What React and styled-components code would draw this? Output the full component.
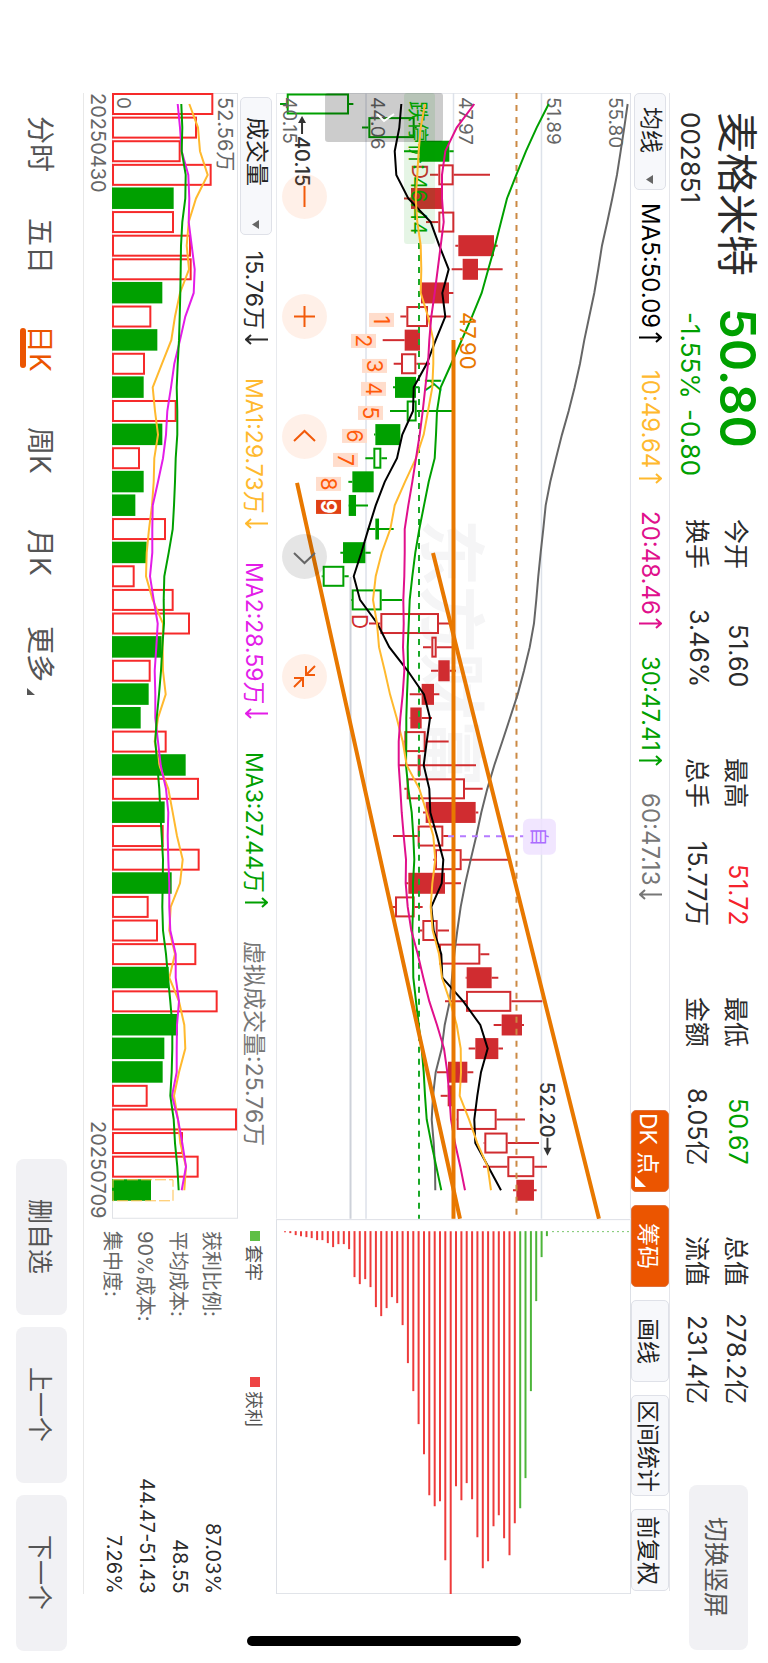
import React from "react";
import styled, { createGlobalStyle } from "styled-components";

const GlobalStyle = createGlobalStyle`
  * {
    box-sizing: border-box;
  }

  body {
    margin: 0;
    background: #fff;
    font-family: Inter, "Noto Sans CJK SC", sans-serif;
  }

  button, select {
    font-family: inherit;
    margin: 0;
    padding: 0;
    border: none;
    writing-mode: vertical-rl;
    text-orientation: sideways;
  }
`;

const GREEN = "#00a000";
const RED = "#d02c30";
const ORANGE = "#eb5500";

/* The terminal is held sideways: inline runs down, blocks run right to left */
const Page = styled.div`
  position: relative;
  width: 100%;
  height: 100vh;
  min-height: 1500px;
  display: flex;
  flex-direction: column;
  writing-mode: vertical-rl;
  text-orientation: sideways;
  color: #2b2b2b;
  white-space: nowrap;
  overflow: hidden;
`;

const Header = styled.header`
  block-size: 98px;
  display: flex;
  align-items: center;
  padding-block-start: 2px;
  padding-inline: 112px 13px;
`;

const Quote = styled.div`
  display: grid;
  grid-template-columns: 196px 211px;
  grid-template-rows: 50px 32px;
  row-gap: 6px;
  align-items: center;
  font-size: 26px;
`;

const StockName = styled.h1`
  margin: 0;
  font-size: 41px;
  line-height: 50px;
  font-weight: 400;
`;

const Price = styled.strong`
  font-size: 49px;
  line-height: 50px;
  font-weight: 600;
  color: ${GREEN};
`;

const Change = styled.span`
  display: flex;
  gap: 10px;
  padding-inline-start: 4px;
  color: ${GREEN};
`;

const Stats = styled.dl`
  flex: 1;
  margin: 0;
  display: grid;
  grid-template-columns: repeat(4, 168px);
  grid-template-rows: 39px 39px;
  column-gap: 71px;
  font-size: 25px;
`;

const Stat = styled.div`
  display: flex;
  justify-content: space-between;
  align-items: center;

  dd {
    margin: 0;
    color: ${(props) => props.$color || "#2b2b2b"};
  }
`;

const GreyButton = styled.button`
  inline-size: ${(props) => props.$size || 156}px;
  block-size: ${(props) => props.$thick || 51}px;
  border-radius: 8px;
  background: #f1f1f4;
  color: #555;
  font-size: 25px;
  cursor: pointer;
`;

const Toolbar = styled.div`
  block-size: 39px;
  margin-inline: 93px 72px;
  border-block-start: 1px solid #e4e5ea;
  display: flex;
  align-items: center;
  gap: 13px;
`;

const Indicators = styled.div`
  flex: 1;
  display: flex;
  align-items: center;
  gap: 27px;
  font-size: 24px;
`;

const Reading = styled.span`
  display: inline-flex;
  align-items: center;
  gap: 4px;
  color: ${(props) => props.$color};
`;

const Arrow = styled.svg`
  inline-size: 11px;
  block-size: 23px;
  fill: none;
  stroke: currentColor;
  stroke-width: 2;
`;

const PickerBox = styled.span`
  position: relative;
  display: inline-flex;
  align-items: center;
`;

const PickerSelect = styled.select`
  appearance: none;
  inline-size: ${(props) => props.$size}px;
  block-size: 32px;
  padding-inline-start: ${(props) => props.$pad}px;
  border: 1px solid #dfe1e8;
  border-radius: 5px;
  background: #f7f8fb;
  color: #222;
  font-size: 23px;
`;

const PickerMark = styled.svg`
  position: absolute;
  inset-inline-end: 6px;
  inset-block-start: 13px;
  width: 7px;
  height: 9px;
  pointer-events: none;
`;

const ToolButton = styled.button`
  position: relative;
  inline-size: ${(props) => props.$size || 82}px;
  block-size: 38px;
  border: 1px solid ${(props) => (props.$active ? "#e0703a" : "#dfe1e8")};
  border-radius: 5px;
  padding-inline-end: ${(props) => (props.$marked ? 14 : 0)}px;
  background: ${(props) => (props.$active ? ORANGE : "#f7f8fb")};
  color: ${(props) => (props.$active ? "#fff" : "#222")};
  font-size: 23px;
  cursor: pointer;
`;

const Corner = styled.svg`
  position: absolute;
  inset-inline-end: 4px;
  inset-block-end: 3px;
  width: 11px;
  height: 11px;
`;

const Row = styled.div`
  flex: ${(props) => (props.$grow ? "1 1 0" : "none")};
  min-block-size: 0;
  margin-inline: 93px 69px;
  display: grid;
  grid-template-columns: minmax(0, 3fr) minmax(0, 1fr);
  grid-template-rows: ${(props) => (props.$grow ? "minmax(0, 1fr)" : "auto")};
`;

const Panel = styled.section`
  position: relative;
  min-block-size: 0;
  display: flex;
  flex-direction: column;
`;

const Chart = styled.svg`
  display: block;
  flex: 1 1 0;
  min-width: 0;
  min-height: 0;
  writing-mode: horizontal-tb;
  fill: none;
`;

const VolumeBox = styled.div`
  block-size: 126px;
  display: flex;
  flex-direction: column;
`;

const RoundTools = styled.div`
  position: absolute;
  inset-inline-start: 81px;
  inset-block-end: 6px;
  display: flex;
  gap: 75px;
`;

const RoundButton = styled.button`
  width: 45px;
  height: 45px;
  border-radius: 50%;
  background: ${(props) => (props.$muted ? "rgba(0, 0, 0, 0.1)" : "rgba(255, 85, 0, 0.09)")};
  color: ${(props) => (props.$muted ? "#666" : "#f25a0a")};
  cursor: pointer;

  svg {
    display: block;
    width: 45px;
    height: 45px;
    fill: none;
    stroke: currentColor;
    stroke-width: 2;
  }
`;

const VolumeHead = styled.div`
  block-size: 38px;
  display: flex;
  align-items: center;
  gap: 33px;
  padding-block-start: 2px;
  padding-inline-start: 4px;
  font-size: 23px;
`;

const FirstReading = styled.div`
  display: flex;
  align-items: center;
  gap: 16px;
`;

const Dates = styled.div`
  block-size: 28px;
  display: flex;
  justify-content: space-between;
  align-items: center;
  font-size: 20px;
  color: #666;
`;

const Legend = styled.div`
  block-size: 38px;
  display: flex;
  align-items: center;
  gap: 96px;
  padding-block-start: 5px;
  padding-inline-start: 12px;
  font-size: 18px;
  color: #555;
`;

const LegendItem = styled.span`
  display: flex;
  align-items: center;
  gap: 4px;

  &::before {
    content: "";
    width: 10px;
    height: 10px;
    background: ${(props) => props.$color};
  }
`;

const Cost = styled.dl`
  margin: 0;
  padding-block-start: 9px;
  padding-inline-start: 12px;
  font-size: 20px;
`;

const CostRow = styled.div`
  block-size: 33px;
  display: flex;
  justify-content: space-between;
  align-items: center;

  dt {
    color: #666;
  }

  dd {
    margin: 0;
  }
`;

const Footer = styled.footer`
  block-size: 84px;
  display: flex;
  justify-content: space-between;
  position: relative;
  padding-inline: 93px 12px;

  &::before {
    content: "";
    position: absolute;
    inset-block-start: 0;
    inset-inline: 93px 69px;
    border-block-start: 1px solid #e8e8e8;
  }
`;

const Tabs = styled.nav`
  display: flex;
`;

const Tab = styled.button`
  position: relative;
  inline-size: 102px;
  block-size: 84px;
  background: none;
  color: ${(props) => (props.$active ? ORANGE : "#555")};
  font-size: 28px;
  cursor: pointer;

  &::after {
    content: "";
    position: absolute;
    inset-inline: 31px;
    inset-block-end: 20px;
    block-size: 6px;
    border-radius: 3px;
    background: ${(props) => (props.$active ? ORANGE : "none")};
  }
`;

const MoreMark = styled.svg`
  position: absolute;
  inset-inline-end: 10px;
  inset-block-end: 27px;
  width: 8px;
  height: 7px;
`;

const Actions = styled.div`
  display: flex;
  gap: 12px;
  padding-block-start: 17px;
`;

const HomeBar = styled.div`
  position: absolute;
  inset-inline-end: 17px;
  inset-block: 247px;
  inline-size: 10px;
  border-radius: 5px;
  background: #000;
`;

const STEP = 23.62;
const FIRST = 11;
const rowY = (i) => FIRST + i * STEP;
const priceX = (v) => v / 3 - 6;
const volumeX = (v) => v / 3 - 112;

// low, body start, body end, high, kind (upper case = filled)
const CANDLES = [
  [30, 50, 237, 250, "g"], [276, 295, 434, 440, "g"], [402, 448, 538, 551, "G"],
  [480, 505, 551, 660, "r"], [402, 423, 517, 517, "R"], [468, 505, 553, 553, "r"],
  [556, 565, 672, 683, "R"], [545, 578, 624, 698, "R"], [450, 453, 537, 550, "R"],
  [391, 409, 474, 542, "r"], [338, 404, 450, 450, "R"], [371, 393, 439, 480, "r"],
  [369, 375, 438, 448, "G"], [360, 410, 440, 550, "g"], [312, 316, 391, 391, "G"],
  [286, 310, 334, 351, "g"], [235, 247, 311, 311, "G"], [235, 236, 258, 294, "G"],
  [293, 316, 327, 371, "g"], [211, 219, 286, 302, "G"], [155, 158, 223, 236, "g"],
  [243, 245, 335, 396, "g"], [297, 331, 507, 545, "r"], [459, 484, 500, 548, "r"],
  [483, 505, 539, 558, "R"], [419, 455, 492, 508, "R"], [419, 421, 455, 486, "R"],
  [401, 403, 467, 536, "r"], [385, 443, 447, 618, "r"], [403, 410, 585, 638, "r"],
  [459, 467, 617, 625, "R"], [369, 443, 520, 535, "r"], [490, 495, 575, 715, "r"],
  [405, 415, 525, 573, "R"], [363, 375, 434, 458, "r"], [448, 457, 503, 537, "r"],
  [505, 507, 631, 658, "r"], [587, 590, 665, 685, "R"], [525, 588, 724, 817, "r"],
  [671, 695, 756, 762, "R"], [596, 616, 685, 699, "R"], [501, 534, 592, 610, "R"],
  [512, 533, 555, 555, "R"], [559, 560, 680, 765, "r"], [641, 643, 713, 807, "r"],
  [639, 712, 793, 831, "r"], [729, 739, 792, 800, "R"],
];

const PRICE_LINES = [
  { color: "#666", data: [1073, 1063, 1052, 1041, 1027, 1012, 996, 985, 973, 958, 943, 930, 914, 896, 876, 858, 841, 827, 820, 812, 805, 799, 792, 779, 762, 743, 720, 697, 673, 652, 634, 619, 602, 586, 572, 562, 553, 546, 539, 524, 515, 497, 489, 485, 491, 495, 496] },
  { color: GREEN, data: [836, 800, 768, 739, 711, 693, 675, 655, 635, 606, 575, 544, 512, 501, 498, 494, 476, 462, 448, 436, 427, 419, 416, 413, 414, 411, 409, 409, 408, 415, 425, 430, 433, 429, 429, 427, 429, 430, 438, 446, 455, 461, 465, 470, 484, 499, 514] },
  { color: "#000", data: [394, 388, 374, 379, 415, 482, 508, 536, 517, 526, 497, 470, 431, 429, 397, 381, 344, 317, 295, 274, 251, 270, 322, 358, 413, 462, 480, 470, 461, 478, 481, 501, 520, 515, 484, 491, 514, 517, 580, 631, 653, 633, 622, 613, 616, 655, 693] },
  { color: "#ffb92e", data: [465, 452, 446, 442, 437, 442, 452, 454, 452, 474, 490, 490, 487, 474, 461, 438, 405, 374, 361, 335, 317, 309, 321, 327, 344, 360, 380, 398, 410, 448, 470, 490, 496, 487, 482, 488, 507, 516, 540, 560, 572, 573, 569, 597, 622, 653, 663] },
  { color: "#e0108c", data: [613, 560, 526, 516, 516, 521, 512, 503, 494, 484, 478, 474, 466, 458, 449, 438, 427, 415, 404, 404, 403, 400, 401, 399, 403, 398, 391, 386, 386, 391, 395, 401, 408, 407, 413, 424, 443, 460, 478, 501, 522, 532, 538, 543, 555, 571, 585] },
];

// positive = hollow red, negative = solid green
const VOLUMES = [
  640, 591, 542, 635, -521, 522, 573, 575, -487, 454, -472, 435, -431, 530, -487, 420,
  -431, -406, 498, -440, 404, 521, 570, -485, 452, -446, -422, 500, -557, 597, -494, 491,
  599, -515, 446, 474, 589, -506, 653, -534, -493, -488, 443, 711, 549, 596, -453,
];

const VOLUME_LINES = [
  { color: "#ffb92e", data: [568, 594, 600, 623, 588, 566, 560, 567, 540, 525, 514, 486, 458, 465, 474, 463, 461, 456, 447, 440, 438, 458, 489, 488, 489, 497, 474, 464, 478, 505, 518, 531, 548, 540, 512, 508, 525, 508, 537, 553, 556, 537, 522, 534, 541, 558, 553] },
  { color: "#e31de8", data: [533, 540, 545, 565, 568, 566, 575, 584, 581, 556, 540, 523, 513, 502, 498, 489, 474, 458, 457, 457, 450, 461, 473, 469, 464, 466, 466, 474, 482, 498, 505, 503, 505, 508, 508, 511, 527, 527, 537, 531, 530, 530, 516, 534, 547, 558, 545] },
  { color: GREEN, data: [544, 547, 545, 557, 556, 547, 543, 542, 541, 539, 537, 533, 530, 532, 532, 527, 525, 522, 518, 506, 493, 491, 492, 487, 483, 477, 470, 466, 472, 478, 481, 485, 489, 488, 487, 489, 498, 504, 511, 517, 517, 515, 511, 521, 525, 532, 536] },
];

const CHIPS = [
  1, 2, 4, 5, 6, 7, 9, 9, 12, 16, 13, 13, 18, 46, 53, 48, 56, 76, 85, 77, 66, 72, 94, 132,
  160, 193, 223, 264, 275, 270, 329, 363, 255, 269, 252, 268, 306, 337, 330, 295, 284, 307,
  324, 292, 277, 247, 160, 70, 26, 5,
];

// x and y of each count mark, centre of the box
const COUNTS = [
  [106, 227], [88, 248], [99, 273], [98, 296], [95, 320], [79, 343], [70, 367], [53, 391], [53, 414],
];

const AXIS = [["40.15", 7], ["44.06", 95], ["47.97", 183], ["51.89", 271], ["55.80", 333]];

const toPoints = (data, x) =>
  data.map((v, i) => `${x(v).toFixed(1)},${rowY(i).toFixed(1)}`).join(" ");

function SideText({ x, y, size = 19, fill = "#666", weight = 400, anchor, children }) {
  return (
    <text
      transform={`translate(${x} ${y}) rotate(90)`}
      fontSize={size}
      fontWeight={weight}
      fill={fill}
      textAnchor={anchor}
    >
      {children}
    </text>
  );
}

function Candle({ index, candle }) {
  const [low, start, end, high, kind] = candle;
  const color = kind.toLowerCase() === "r" ? RED : GREEN;
  const filled = kind === kind.toUpperCase();
  const y = rowY(index);
  const inset = filled ? 0 : 1;
  return (
    <g stroke={color} strokeWidth="2">
      <path d={`M${priceX(low)} ${y}H${priceX(start)}M${priceX(end)} ${y}H${priceX(high)}`} />
      <rect
        x={priceX(start) + inset}
        y={y - 10.5 + inset}
        width={Math.max((end - start) / 3 - inset * 2, 1)}
        height={21 - inset * 2}
        fill={filled ? color : "none"}
        stroke={filled ? "none" : color}
      />
    </g>
  );
}

function PriceChart() {
  return (
    <Chart viewBox="0 0 355 1126" role="img" aria-label="日K">
      <path d="M0 .5H355M.5 0V1126" stroke="#e8eaee" />
      <path d="M354.5 0V1126" stroke="#dfe1e8" />
      <path d="M90 0V1126M177.500 0V1126M265.500 0V1126" stroke="#dde2ea" strokeWidth="1.500" />
      <path d="M74.500 484V1126" stroke="#cdd1d9" strokeWidth="2" />
      <SideText x={151} y={426} size={67} weight={700} fill="#f5f5f6">东方财富</SideText>
      {CANDLES.map((candle, i) => (
        <Candle key={i} index={i} candle={candle} />
      ))}
      <path d="M240.500 0V1126" stroke="#cc8a45" strokeWidth="2" strokeDasharray="6 6" />
      <path d="M143 150V1126" stroke="#1aa828" strokeWidth="2" strokeDasharray="6 6" />
      {AXIS.map(([label, x]) => (
        <SideText key={label} x={x} y={4}>{label}</SideText>
      ))}
      <SideText x={136} y={71} size={21} fill={RED}>D</SideText>
      <SideText x={76} y={521} size={21} fill={RED}>D</SideText>
      <SideText x={149} y={285} size={21} fill={GREEN}>K</SideText>
      <rect x="128" y="0" width="31" height="151" rx="3" fill="#00a000" fillOpacity=".1" />
      <rect x="49" y="0" width="118" height="49" rx="3" fill="#000" fillOpacity=".2" />
      <path d="M101 21L108 28L118 21" stroke="#fff" strokeWidth="2" />
      <SideText x={135} y={8} size={21} fill={GREEN}>跌停价: 46.44</SideText>
      {PRICE_LINES.map(({ color, data }) => (
        <polyline key={color} points={toPoints(data, priceX)} stroke={color} strokeWidth="2" />
      ))}
      {COUNTS.map(([x, y], i) => (
        <g key={i}>
          <rect x={x - 13} y={y - 7} width="25" height="14" fill={i === 8 ? "#e04014" : "#ffddcc"} />
          <SideText x={x - 8} y={y} size={21} weight={i === 8 ? 700 : 400} anchor="middle" fill={i === 8 ? "#fff" : "#ff5a0a"}>
            {i + 1}
          </SideText>
        </g>
      ))}
      <g stroke="#e87800" strokeWidth="4">
        <path d="M177.500 247V1126" />
        <path d="M21 390L184 1126M157 460L323 1126" />
      </g>
      <SideText x={184} y={219} size={22} fill="#e87800">47.90</SideText>
      <SideText x={19} y={43} size={20} weight={500} fill="#333">40.15</SideText>
      <path d="M26 41V26" stroke="#333" strokeWidth="2" />
      <path d="M26 23L22 30H30Z" fill="#333" />
      <SideText x={264} y={989} size={20} weight={500} fill="#333">52.20</SideText>
      <path d="M271.500 1045V1058" stroke="#333" strokeWidth="2" />
      <path d="M271.500 1063L267.500 1055H275.500Z" fill="#333" />
      <path d="M172 743.500H248" stroke="#b57bff" strokeWidth="2" strokeDasharray="6 6" />
      <rect x="247" y="726" width="33" height="36" rx="6" fill="#eee2ff" fillOpacity=".85" />
      <SideText x={256} y={744} size={19} anchor="middle" fill="#ab6cff">自</SideText>
    </Chart>
  );
}

function ChipChart() {
  return (
    <Chart viewBox="0 0 355 375" role="img" aria-label="筹码分布">
      <rect x=".5" y=".5" width="354" height="374" stroke="#dde0e6" />
      {CHIPS.map((length, i) => (
        <path
          key={i}
          d={`M${(9 + i * 5.345).toFixed(1)} 12v${length}`}
          stroke={i < 44 ? "#ee3b3b" : "#4db53a"}
          strokeWidth="2"
        />
      ))}
      <path d="M276 12.500H355" stroke="#7cc96e" strokeDasharray="2 3" />
    </Chart>
  );
}

function VolumeChart() {
  return (
    <Chart viewBox="0 0 126 1126" role="img" aria-label="成交量">
      <rect x=".5" y=".5" width="125" height="1125" stroke="#e0e2e6" />
      {VOLUMES.map((v, i) => {
        const end = volumeX(Math.abs(v));
        const y = rowY(i);
        return v < 0 ? (
          <rect key={i} x="0" y={y - 11} width={end} height="21.500" fill={GREEN} />
        ) : (
          <rect key={i} x="1" y={y - 10} width={end - 2} height="20" stroke="#f62a2a" strokeWidth="2" />
        );
      })}
      <rect x="1" y={rowY(46) - 10.5} width="60" height="21" stroke="#ffc04d" strokeDasharray="11 3" />
      {VOLUME_LINES.map(({ color, data }) => (
        <polyline key={color} points={toPoints(data, volumeX)} stroke={color} strokeWidth="2" />
      ))}
      <SideText x={106} y={4} size={20}>52.56万</SideText>
      <SideText x={5} y={4}>0</SideText>
    </Chart>
  );
}

function Picker({ label, value, size, pad }) {
  return (
    <PickerBox>
      <PickerSelect aria-label={label} $size={size} $pad={pad} defaultValue={value}>
        <option>{value}</option>
      </PickerSelect>
      <PickerMark viewBox="0 0 7 9">
        <path d="M0 4.500L7 0V9Z" fill="#666" />
      </PickerMark>
    </PickerBox>
  );
}

function Trend({ color, up, children }) {
  return (
    <Reading $color={color}>
      {children}
      <Arrow viewBox="0 0 23 11">
        <path d={up ? "M0 5.500H22M17 1L22 5.500L17 10" : "M23 5.500H1M6 1L1 5.500L6 10"} />
      </Arrow>
    </Reading>
  );
}

const STATS = [
  ["今开", "51.60"],
  ["最高", "51.72", "#f5222d"],
  ["最低", "50.67", GREEN],
  ["总值", "278.2亿"],
  ["换手", "3.46%"],
  ["总手", "15.77万"],
  ["金额", "8.05亿"],
  ["流值", "231.4亿"],
];

const COSTS = [
  ["获利比例:", "87.03%"],
  ["平均成本:", "48.55"],
  ["90%成本:", "44.47-51.43"],
  ["集中度:", "7.26%"],
];

const ROUND_TOOLS = [
  ["缩小", "M22.500 12V33"],
  ["放大", "M22.500 12V33M12 22.500H33"],
  ["向左", "M12 27L22.500 17L33 27"],
  ["向右", "M12 19L22.500 29L33 19"],
  ["收起", "M33 12L24 21M24 12V21H33M12 33L21 24M12 24H21V33"],
];

const TABS = ["分时", "五日", "日K", "周K", "月K", "更多"];

export default function App() {
  return (
    <Page>
      <GlobalStyle />
      <Header>
        <Quote>
          <StockName>麦格米特</StockName>
          <Price>50.80</Price>
          <span>002851</span>
          <Change>
            <span>-1.55%</span>
            <span>-0.80</span>
          </Change>
        </Quote>
        <Stats>
          {STATS.map(([name, value, color]) => (
            <Stat key={name} $color={color}>
              <dt>{name}</dt>
              <dd>{value}</dd>
            </Stat>
          ))}
        </Stats>
        <GreyButton $size={165} $thick={59}>切换竖屏</GreyButton>
      </Header>

      <Toolbar>
        <Picker label="主图指标" value="均线" size={97} pad={13} />
        <Indicators>
          <Trend color="#000" up>MA5:50.09</Trend>
          <Trend color="#ffb92e" up>10:49.64</Trend>
          <Trend color="#e0108c" up>20:48.46</Trend>
          <Trend color={GREEN} up>30:47.41</Trend>
          <Trend color="#777">60:47.13</Trend>
        </Indicators>
        <ToolButton $active $marked>
          DK 点
          <Corner viewBox="0 0 11 11">
            <path d="M0 0V11H11Z" fill="#fff" />
          </Corner>
        </ToolButton>
        <ToolButton $active>筹码</ToolButton>
        <ToolButton>画线</ToolButton>
        <ToolButton $size={101}>区间统计</ToolButton>
        <ToolButton>前复权</ToolButton>
      </Toolbar>

      <Row $grow>
        <Panel>
          <PriceChart />
          <RoundTools>
            {ROUND_TOOLS.map(([label, d]) => (
              <RoundButton key={label} aria-label={label} $muted={label === "向右"}>
                <svg viewBox="0 0 45 45">
                  <path d={d} />
                </svg>
              </RoundButton>
            ))}
          </RoundTools>
        </Panel>
        <Panel>
          <ChipChart />
        </Panel>
      </Row>

      <Row>
        <Panel>
          <VolumeHead>
            <FirstReading>
              <Picker label="副图指标" value="成交量" size={138} pad={19} />
              <Trend color="#2b2b2b">15.76万</Trend>
            </FirstReading>
            <Trend color="#ffb92e">MA1:29.73万</Trend>
            <Trend color="#e31de8">MA2:28.59万</Trend>
            <Trend color={GREEN} up>MA3:27.44万</Trend>
            <Reading $color="#777">虚拟成交量:25.76万</Reading>
          </VolumeHead>
          <VolumeBox>
            <VolumeChart />
          </VolumeBox>
          <Dates>
            <time>20250430</time>
            <time>20250709</time>
          </Dates>
        </Panel>
        <Panel>
          <Legend>
            <LegendItem $color="#5fbf45">套牢</LegendItem>
            <LegendItem $color="#ee4444">获利</LegendItem>
          </Legend>
          <Cost>
            {COSTS.map(([name, value]) => (
              <CostRow key={name}>
                <dt>{name}</dt>
                <dd>{value}</dd>
              </CostRow>
            ))}
          </Cost>
        </Panel>
      </Row>

      <Footer>
        <Tabs>
          {TABS.map((tab) => (
            <Tab key={tab} $active={tab === "日K"}>
              {tab}
              {tab === "更多" && (
                <MoreMark viewBox="0 0 8 7">
                  <path d="M0 0V7H8Z" fill="#555" />
                </MoreMark>
              )}
            </Tab>
          ))}
        </Tabs>
        <Actions>
          <GreyButton>删自选</GreyButton>
          <GreyButton>上一个</GreyButton>
          <GreyButton>下一个</GreyButton>
        </Actions>
      </Footer>
      <HomeBar />
    </Page>
  );
}
